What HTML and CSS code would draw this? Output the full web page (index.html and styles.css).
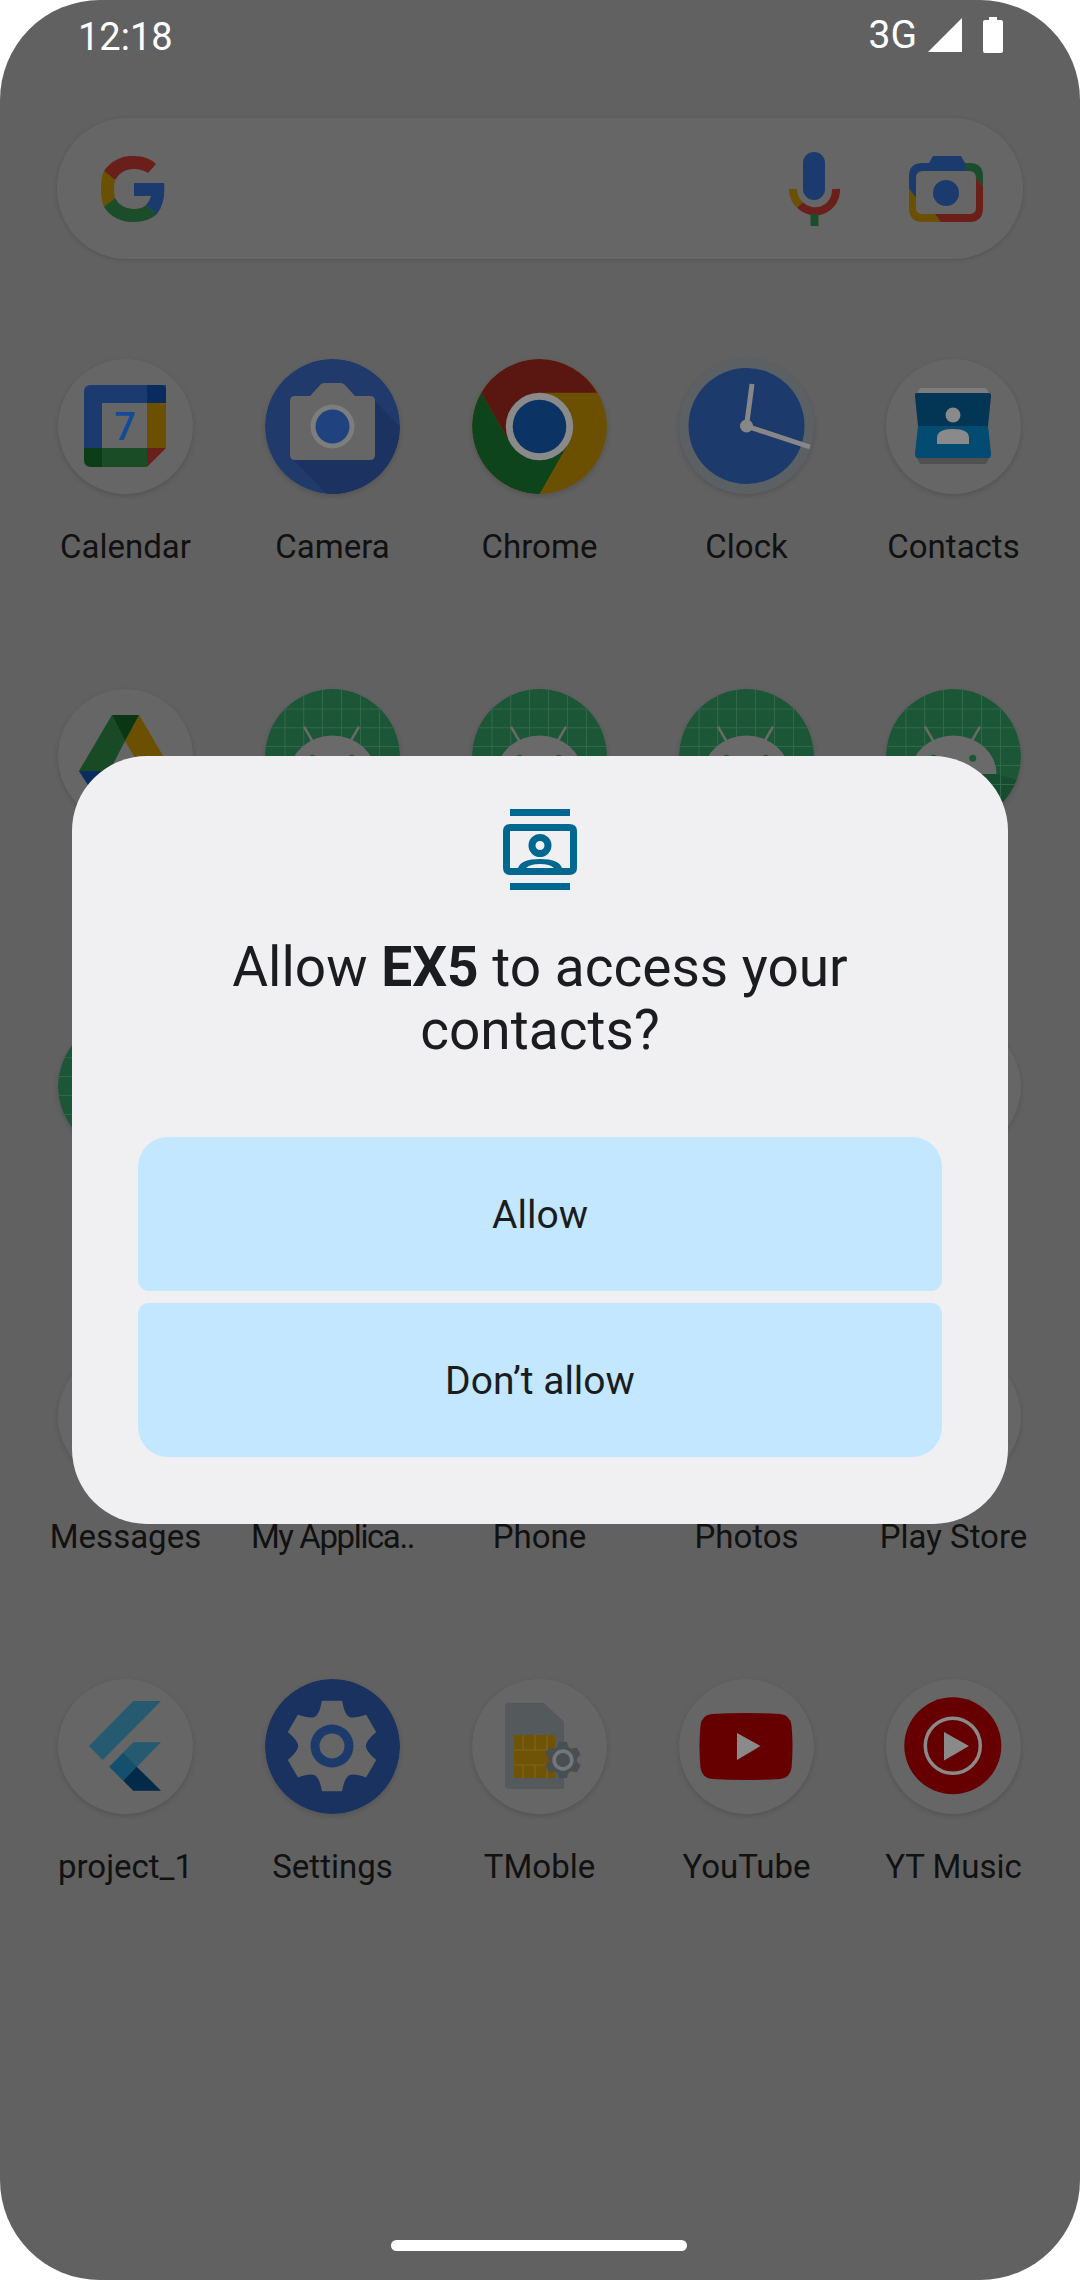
FILE: index.html
```html
<!DOCTYPE html>
<html lang="en">
<head>
    <meta charset="UTF-8">
    <meta name="viewport" content="width=device-width, initial-scale=1.0">
    <title>Permission dialog</title>
    <link rel="stylesheet" href="styles.css">
</head>
<body>
    <svg class="defs" width="0" height="0">
        <defs>
            <symbol id="android" viewBox="0 0 135 135">
                <circle cx="67.5" cy="67.5" r="67.5" fill="#1b5636"/>
                <path d="M110.5 85L130.500 91A67.5 67.5 0 0 1 67.500 135L30 85Z" fill="#184c30"/>
                <path d="M4 20H131M0 38.700H135M0 57.500H135M0 76.500H135M0 95.500H135M4 114.500H131M20 4V131M38.700 0V135M57.500 0V135M76.500 0V135M95.500 0V135M114.500 4V131" stroke="#33674d" stroke-width="1.100" fill="none"/>
                <path d="M39 37.700L47.300 52M94 37.700L85.700 52" stroke="#6a6a6a" stroke-width="2.500" fill="none"/>
                <path d="M24.500 85A43 38.500 0 0 1 110.500 85Z" fill="#6a6a6a"/>
                <circle cx="47.500" cy="69.300" r="3.500" fill="#1b5636"/>
                <circle cx="86.700" cy="69.300" r="3.500" fill="#1b5636"/>
            </symbol>
            <symbol id="gear" viewBox="-50 -50 100 100">
                <circle r="26"/>
                <path id="gear-tooth" d="M0 0L-16.500 -28.600Q-11.600 -32 -9.500 -44.500H9.500Q11.600 -32 16.500 -28.600Z" stroke-width="1.500" stroke-linejoin="round"/>
                <use href="#gear-tooth" transform="rotate(60)"/>
                <use href="#gear-tooth" transform="rotate(120)"/>
                <use href="#gear-tooth" transform="rotate(180)"/>
                <use href="#gear-tooth" transform="rotate(240)"/>
                <use href="#gear-tooth" transform="rotate(300)"/>
            </symbol>
        </defs>
    </svg>

    <div class="screen">
        <div class="status-bar">
            <span class="time">12:18</span>
            <div class="status-right">
                <span class="network">3G</span>
                <svg class="signal" width="34" height="34" viewBox="0 0 34 34"><path d="M34 0V34H0Z" fill="#fff"/></svg>
                <svg class="battery" width="20" height="36" viewBox="0 0 20 36"><path d="M6 0H14V3H18Q20 3 20 5V34Q20 36 18 36H2Q0 36 0 34V5Q0 3 2 3H6Z" fill="#fff"/></svg>
            </div>
        </div>

        <div class="search-bar">
            <svg width="64" height="66" viewBox="0 0 64 66">
                <path d="M33 0Q47 0 55 8L47 17Q41 13 33 13A20 20 0 0 0 14 24L3 15A33 33 0 0 1 33 0Z" fill="#6a1f1a"/>
                <path d="M3 15L14 24Q12 33 14 42L3 51C-1 42 -1 24 3 15Z" fill="#6a5000"/>
                <path d="M3 51L14 42A20 20 0 0 0 33 53Q41 53 45 49L56 58Q47 66 33 66A33 33 0 0 1 3 51Z" fill="#1b4d2a"/>
                <path d="M33 27H63Q65 46 56 58L45 49Q49 45 50 40H33Z" fill="#1b3a6e"/>
            </svg>
            <div class="search-actions">
                <svg width="51" height="74" viewBox="0 0 51 74">
                    <rect x="14" y="0" width="22" height="48" rx="11" fill="#1b3a6e"/>
                    <path d="M4 37A21 21 0 0 0 11 53" stroke="#6a5000" stroke-width="8" fill="none"/>
                    <path d="M11 53A21 21 0 0 0 47 37" stroke="#6a1f1a" stroke-width="8" fill="none"/>
                    <rect x="21.500" y="62" width="8" height="12" fill="#1b4d2a"/>
                </svg>
                <svg width="74" height="66" viewBox="0 0 74 66">
                    <path d="M24 0H52L56 7H60Q62 7 62 15H14Q7 15 7 22V42L0 34V20Q0 7 14 7H20Z" fill="#1b3a6e"/>
                    <path d="M56 7H60Q74 7 74 20V30L67 22Q67 15 60 15H56Z" fill="#1b4d2a"/>
                    <path d="M0 32L7 42V52Q7 58 14 58H26L32 66H14Q0 66 0 52Z" fill="#6a5000"/>
                    <path d="M67 22L74 30V52Q74 66 60 66H32L26 58H60Q67 58 67 52Z" fill="#6a1f1a"/>
                    <circle cx="37" cy="37" r="13" fill="#1b3a6e"/>
                </svg>
            </div>
        </div>

        <div class="app-grid">
            <div class="app">
                <svg class="app-icon" viewBox="0 0 135 135">
                    <circle cx="67.5" cy="67.5" r="67.5" fill="#666"/>
                    <path d="M33 26H108V44H44V89H26V33Q26 26 33 26Z" fill="#1a3a70"/>
                    <path d="M89 26H102Q108 26 108 33V44H89Z" fill="#0a2b5e"/>
                    <rect x="89" y="44" width="19" height="45" fill="#6a5000"/>
                    <rect x="44" y="89" width="45" height="19" fill="#1a4d26"/>
                    <path d="M26 89H44V108H33Q26 108 26 101Z" fill="#0c3d18"/>
                    <path d="M89 89H108L89 108Z" fill="#6a1f1a"/>
                    <text x="67" y="81" class="cal-day">7</text>
                </svg>
                <span class="label">Calendar</span>
            </div>
            <div class="app">
                <svg class="app-icon" viewBox="0 0 135 135">
                    <circle cx="67.5" cy="67.5" r="67.5" fill="#203a6b"/>
                    <path d="M28 100L62 135A67.5 67.5 0 0 0 135 67.500L105 37V100Z" fill="#1c3361"/>
                    <path d="M30 37H45L56 25Q58 24 60 24H76Q78 24 80 26L90 37H105Q110 37 110 42V96Q110 101 105 101H30Q25 101 25 96V42Q25 37 30 37Z" fill="#666"/>
                    <circle cx="67.5" cy="67.5" r="22" fill="#7d7d7d"/>
                    <circle cx="67.5" cy="67.5" r="17" fill="#20427e"/>
                </svg>
                <span class="label">Camera</span>
            </div>
            <div class="app">
                <svg class="app-icon" viewBox="0 0 135 135">
                    <circle cx="67.5" cy="67.5" r="67.5" fill="#6a5000"/>
                    <path d="M67.5 0A67.5 67.5 0 0 0 9.300 33.700L38 84L67.500 33.700H125A67.5 67.5 0 0 0 67.500 0Z" fill="#5a1712"/>
                    <path d="M9.300 33.700A67.5 67.5 0 0 0 67.500 135L96 85L38 84Z" fill="#0e441b"/>
                    <circle cx="67.5" cy="67.5" r="33.7" fill="#8a8a8a"/>
                    <circle cx="67.5" cy="67.5" r="26.8" fill="#0b3465"/>
                </svg>
                <span class="label">Chrome</span>
            </div>
            <div class="app">
                <svg class="app-icon" viewBox="0 0 135 135">
                    <circle cx="67.5" cy="67.5" r="67.5" fill="#5a6064"/>
                    <circle cx="67.5" cy="67" r="58" fill="#1d3a6c"/>
                    <path d="M73 25L67.5 67L131 88" stroke="#878787" stroke-width="5" fill="none"/>
                    <circle cx="67.5" cy="67" r="6.5" fill="#878787"/>
                </svg>
                <span class="label">Clock</span>
            </div>
            <div class="app">
                <svg class="app-icon" viewBox="0 0 135 135">
                    <circle cx="67.5" cy="67.5" r="67.5" fill="#666"/>
                    <path d="M34 29H100L104 36H30Z" fill="#7d7d7d"/>
                    <path d="M30 97H104L100 105H34Z" fill="#505050"/>
                    <path d="M31 34H103Q105.500 34 105 37L102 67H32L29 37Q28.500 34 31 34Z" fill="#033554"/>
                    <path d="M32 67H102L105 94Q105.500 99 102 99H32Q28.500 99 29 94Z" fill="#044b72"/>
                    <circle cx="67" cy="56" r="7.5" fill="#8a8a8a"/>
                    <path d="M51 85V79Q51 70 67 70T83 79V85Z" fill="#8a8a8a"/>
                </svg>
                <span class="label">Contacts</span>
            </div>

            <div class="app">
                <svg class="app-icon" viewBox="0 0 135 135">
                    <circle cx="67.5" cy="67.5" r="67.5" fill="#666"/>
                    <path d="M81 26L114 82H85L67 52Z" fill="#6a5000"/>
                    <path d="M54 26L67 52L38 108L21 82Z" fill="#174a25"/>
                    <path d="M54 26H81L67 52Z" fill="#0a3613"/>
                    <path d="M21 82H114L98 108H38Z" fill="#0a2d5e"/>
                </svg>
                <span class="label"></span>
            </div>
            <div class="app"><svg class="app-icon"><use href="#android"/></svg><span class="label"></span></div>
            <div class="app"><svg class="app-icon"><use href="#android"/></svg><span class="label"></span></div>
            <div class="app"><svg class="app-icon"><use href="#android"/></svg><span class="label"></span></div>
            <div class="app"><svg class="app-icon"><use href="#android"/></svg><span class="label"></span></div>

            <div class="app"><svg class="app-icon"><use href="#android"/></svg><span class="label"></span></div>
            <div class="app"><div class="app-icon blank"></div><span class="label"></span></div>
            <div class="app"><div class="app-icon blank"></div><span class="label"></span></div>
            <div class="app"><div class="app-icon blank"></div><span class="label"></span></div>
            <div class="app"><div class="app-icon blank"></div><span class="label"></span></div>

            <div class="app"><div class="app-icon blank"></div><span class="label">Messages</span></div>
            <div class="app"><div class="app-icon blank"></div><span class="label squeezed">My Applica..</span></div>
            <div class="app"><div class="app-icon blank"></div><span class="label">Phone</span></div>
            <div class="app"><div class="app-icon blank"></div><span class="label">Photos</span></div>
            <div class="app"><div class="app-icon blank"></div><span class="label">Play Store</span></div>

            <div class="app">
                <svg class="app-icon" viewBox="0 0 135 135">
                    <circle cx="67.5" cy="67.5" r="67.5" fill="#666"/>
                    <path d="M103 22H75.3L31 67L44.7 81Z" fill="#265a70"/>
                    <path d="M103 63.3H75.3L51.3 87.7L65.3 101.7Z" fill="#265a70"/>
                    <path d="M51.3 87.7L65.3 73.7L78.7 87.7L65.3 101.7Z" fill="#12506e"/>
                    <path d="M65.3 101.7L78.7 87.7L103 111.7H75.3Z" fill="#032a48"/>
                </svg>
                <span class="label">project_1</span>
            </div>
            <div class="app">
                <svg class="app-icon" viewBox="0 0 135 135">
                    <circle cx="67.5" cy="67.5" r="67.5" fill="#1a3260"/>
                    <use href="#gear" x="17" y="17" width="100" height="100" fill="#666" stroke="#666"/>
                    <circle cx="67" cy="67" r="21.5" fill="#1d3a6c"/>
                    <circle cx="67" cy="67" r="12.5" fill="#666"/>
                </svg>
                <span class="label">Settings</span>
            </div>
            <div class="app">
                <svg class="app-icon" viewBox="0 0 135 135">
                    <circle cx="67.5" cy="67.5" r="67.5" fill="#666"/>
                    <path d="M37 23.700H71.300L92 42.700V109.700H37Q33 109.700 33 105.700V27.700Q33 23.700 37 23.700Z" fill="#54595c"/>
                    <rect x="42" y="56" width="41" height="43" fill="#6f5408"/>
                    <path d="M42 71H83M42 86H83M51 56V71M63 56V71M75 56V71M51 86V99M63 86V99M75 86V99" stroke="#7d6420" stroke-width="1.2" fill="none"/>
                    <use href="#gear" x="71" y="61" width="40" height="40" fill="#484e52" stroke="#484e52"/>
                    <circle cx="91" cy="81" r="10.7" fill="#72777a"/>
                    <circle cx="91" cy="81" r="7" fill="#484e52"/>
                </svg>
                <span class="label">TMoble</span>
            </div>
            <div class="app">
                <svg class="app-icon" viewBox="0 0 135 135">
                    <circle cx="67.5" cy="67.5" r="67.5" fill="#666"/>
                    <path d="M33 35Q67 33 101 35Q111 36 112.500 46Q114.500 67 112.500 89Q111 99 101 100Q67 102 33 100Q23 99 21.500 89Q19.500 67 21.500 46Q23 36 33 35Z" fill="#660000"/>
                    <path d="M58 54L81.500 67L58 81Z" fill="#8a8a8a"/>
                </svg>
                <span class="label">YouTube</span>
            </div>
            <div class="app">
                <svg class="app-icon" viewBox="0 0 135 135">
                    <circle cx="67.5" cy="67.5" r="67.5" fill="#666"/>
                    <circle cx="66.8" cy="66.8" r="48.5" fill="#660000"/>
                    <circle cx="66.8" cy="66.8" r="27.5" fill="none" stroke="#8a8a8a" stroke-width="3.5"/>
                    <path d="M58 53L83 67L58 81.500Z" fill="#8a8a8a"/>
                </svg>
                <span class="label">YT Music</span>
            </div>
        </div>

        <div class="dialog">
            <svg class="dialog-icon" width="74" height="81" viewBox="0 0 74 81">
                <path d="M7 0H67V7H7ZM7 74H67V81H7ZM8 15H66Q74 15 74 22V59Q74 66 66 66H8Q0 66 0 59V22Q0 15 8 15ZM7 22V59H15Q18 50 37 50T59 59H67V22ZM37 25A11.500 11.500 0 1 1 37 48A11.500 11.500 0 1 1 37 25ZM37 32A4.500 4.500 0 1 0 37 41A4.500 4.500 0 1 0 37 32ZM23 59H51Q47 55 37 55T23 59Z" fill="#006890" fill-rule="evenodd"/>
            </svg>
            <h2 class="dialog-title">Allow <b>EX5</b> to access your contacts?</h2>
            <div class="dialog-buttons">
                <button class="dialog-button top">Allow</button>
                <button class="dialog-button bottom">Don’t allow</button>
            </div>
        </div>

        <div class="home-pill"></div>
    </div>
</body>
</html>
```

FILE: styles.css
```css
* {
    box-sizing: border-box;
}
html, body {
    margin: 0;
    padding: 0;
    background: #fff;
}
body {
    font-family: Roboto, "Noto Sans", sans-serif;
}
.defs {
    position: absolute;
}
.screen {
    position: relative;
    width: 1080px;
    height: 2280px;
    overflow: hidden;
    background: #616161;
    border-radius: 100px;
}
.status-bar {
    display: flex;
    justify-content: space-between;
    align-items: center;
    height: 74px;
    padding: 0 77px 0 78px;
    color: #fff;
}
.time {
    font-size: 38px;
}
.status-right {
    display: flex;
    align-items: center;
    gap: 11px;
    margin-bottom: 4px;
}
.network {
    font-size: 39px;
}
.battery {
    margin-left: 10px;
}
.search-bar {
    display: flex;
    justify-content: space-between;
    align-items: center;
    height: 141px;
    margin: 44px 57px 0;
    padding: 0 40px 0 44px;
    background: #666;
    border-radius: 70px;
    box-shadow: 0 1px 4px rgba(0, 0, 0, .15);
}
.search-actions {
    display: flex;
    align-items: center;
    gap: 69px;
}
.app-grid {
    display: grid;
    grid-template-columns: repeat(5, 207px);
    grid-auto-rows: 330px;
    margin: 100px 0 0 22px;
}
.app {
    display: flex;
    flex-direction: column;
    align-items: center;
    min-width: 0;
}
.app-icon {
    display: block;
    width: 135px;
    height: 135px;
    border-radius: 50%;
    box-shadow: 0 2px 5px rgba(0, 0, 0, .14);
}
.blank {
    background: #666;
}
.label {
    margin-top: 33px;
    font-size: 33px;
    line-height: 40px;
    color: #111;
    white-space: nowrap;
}
.squeezed {
    letter-spacing: -1.4px;
}
.cal-day {
    font-family: Roboto, sans-serif;
    font-size: 38px;
    font-weight: 500;
    fill: #134a9a;
    text-anchor: middle;
}
.dialog {
    position: absolute;
    left: 72px;
    top: 756px;
    width: 936px;
    height: 768px;
    padding: 53px 66px 0;
    background: #f0f0f3;
    border-radius: 75px;
    text-align: center;
}
.dialog-icon {
    display: block;
    margin: 0 auto;
}
.dialog-title {
    margin: 46px 0 0;
    font-size: 55px;
    line-height: 63px;
    font-weight: 400;
    color: #1b1c1f;
}
.dialog-title b {
    font-weight: 700;
}
.dialog-buttons {
    display: flex;
    flex-direction: column;
    gap: 12px;
    margin-top: 75px;
}
.dialog-button {
    height: 154px;
    padding-top: 3px;
    border: none;
    background: #c2e7ff;
    color: #1a1c1e;
    font-family: inherit;
    font-size: 39px;
}
.top {
    border-radius: 30px 30px 11px 11px;
}
.bottom {
    border-radius: 11px 11px 30px 30px;
}
.home-pill {
    position: absolute;
    left: 391px;
    bottom: 29px;
    width: 296px;
    height: 11px;
    background: #fff;
    border-radius: 6px;
}
```
